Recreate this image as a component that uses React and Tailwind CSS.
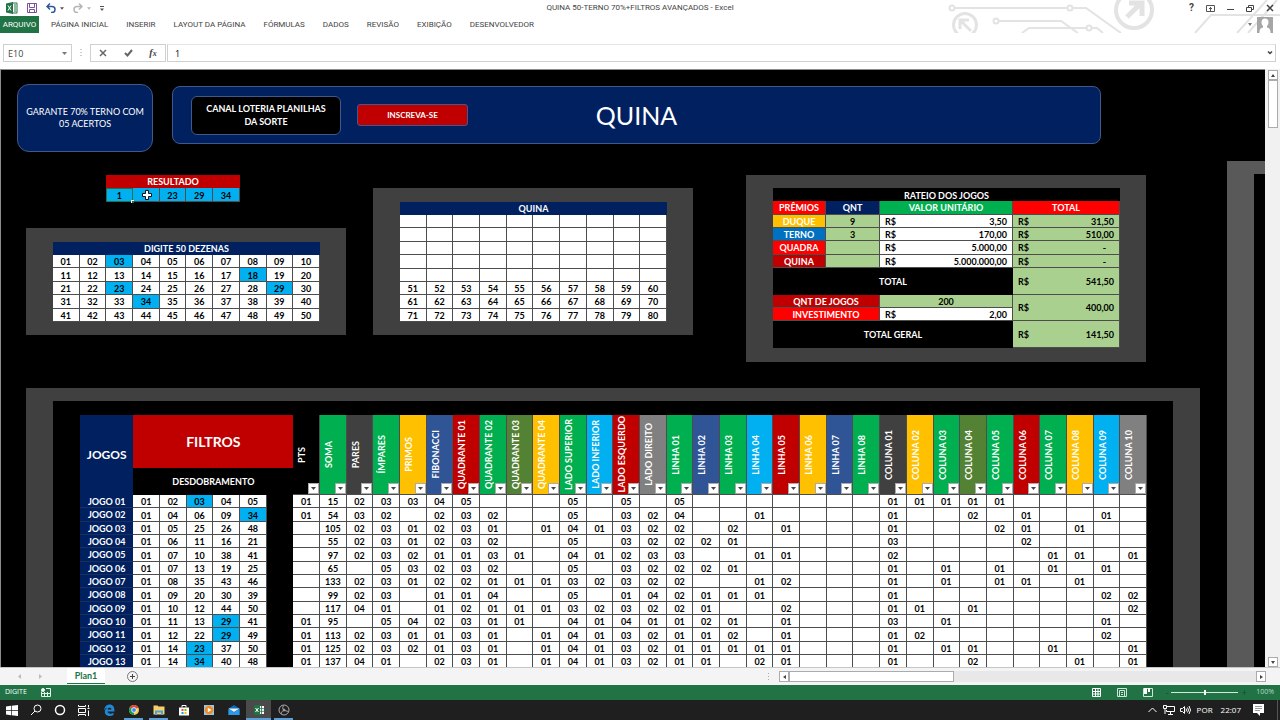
import React, { useState } from "react";
import clsx from "clsx";

const ribbonTabs = [
  "PÁGINA INICIAL",
  "INSERIR",
  "LAYOUT DA PÁGINA",
  "FÓRMULAS",
  "DADOS",
  "REVISÃO",
  "EXIBIÇÃO",
  "DESENVOLVEDOR",
];

const drawn = ["03", "18", "23", "29", "34"];

const filterColumns = [
  ["PTS", "bg-black"],
  ["SOMA", "bg-[#00b050]"],
  ["PARES", "bg-[#404040]"],
  ["ÍMPARES", "bg-[#00b050]"],
  ["PRIMOS", "bg-[#ffc000]"],
  ["FIBONACCI", "bg-[#2f5597]"],
  ["QUADRANTE 01", "bg-[#c00000]"],
  ["QUADRANTE 02", "bg-[#00b050]"],
  ["QUADRANTE 03", "bg-[#548235]"],
  ["QUADRANTE 04", "bg-[#ffc000]"],
  ["LADO SUPERIOR", "bg-[#00b050]"],
  ["LADO INFERIOR", "bg-[#00b0f0]"],
  ["LADO ESQUERDO", "bg-[#c00000]"],
  ["LADO DIREITO", "bg-[#808080]"],
  ["LINHA 01", "bg-[#00b050]"],
  ["LINHA 02", "bg-[#2f5597]"],
  ["LINHA 03", "bg-[#00b050]"],
  ["LINHA 04", "bg-[#00b0f0]"],
  ["LINHA 05", "bg-[#c00000]"],
  ["LINHA 06", "bg-[#ffc000]"],
  ["LINHA 07", "bg-[#2f5597]"],
  ["LINHA 08", "bg-[#00b050]"],
  ["COLUNA 01", "bg-[#404040]"],
  ["COLUNA 02", "bg-[#ffc000]"],
  ["COLUNA 03", "bg-[#00b050]"],
  ["COLUNA 04", "bg-[#548235]"],
  ["COLUNA 05", "bg-[#00b050]"],
  ["COLUNA 06", "bg-[#c00000]"],
  ["COLUNA 07", "bg-[#00b050]"],
  ["COLUNA 08", "bg-[#ffc000]"],
  ["COLUNA 09", "bg-[#00b0f0]"],
  ["COLUNA 10", "bg-[#808080]"],
];

// numbers of each game, then the value of every filter column ("." is an empty cell)
const games = [
  ["01 02 03 04 05", "01 15 02 03 03 04 05 . . . 05 . 05 . 05 . . . . . . . 01 01 01 01 01 . . . . ."],
  ["01 04 06 09 34", "01 54 03 02 . 02 03 02 . . 05 . 03 02 04 . . 01 . . . . 01 . . 02 . 01 . . 01 ."],
  ["01 05 25 26 48", ". 105 02 03 01 02 03 01 . 01 04 01 03 02 02 . 02 . 01 . . . 01 . . . 02 01 . 01 . ."],
  ["01 06 11 16 21", ". 55 02 03 01 02 03 02 . . 05 . 03 02 02 02 01 . . . . . 03 . . . . 02 . . . ."],
  ["01 07 10 38 41", ". 97 02 03 02 01 01 03 01 . 04 01 02 03 03 . . 01 01 . . . 02 . . . . . 01 01 . 01"],
  ["01 07 13 19 25", ". 65 . 05 03 02 03 02 . . 05 . 03 02 02 02 01 . . . . . 01 . 01 . 01 . 01 . 01 ."],
  ["01 08 35 43 46", ". 133 02 03 01 02 02 01 01 01 03 02 03 02 02 . . 01 02 . . . 01 . 01 . 01 01 . 01 . ."],
  ["01 09 20 30 39", ". 99 02 03 . 01 01 04 . . 05 . 01 04 02 01 01 01 . . . . 01 . . . . . . . 02 02"],
  ["01 10 12 44 50", ". 117 04 01 . 01 02 01 01 01 03 02 03 02 02 01 . . 02 . . . 01 01 . 01 . . . . . 02"],
  ["01 11 13 29 41", "01 95 . 05 04 02 03 01 01 . 04 01 04 01 01 02 01 . 01 . . . 03 . 01 . . . . . 01 ."],
  ["01 12 22 29 49", "01 113 02 03 01 01 03 01 . 01 04 01 03 02 01 01 02 . 01 . . . 01 02 . . . . . . 02 ."],
  ["01 14 23 37 50", "01 125 02 03 02 01 03 01 . 01 04 01 03 02 01 01 01 01 01 . . . 01 . 01 01 . . 01 . . 01"],
  ["01 14 34 40 48", "01 137 04 01 . 02 03 01 . 01 04 01 03 02 01 01 . 02 01 . . . 01 . . 02 . . . 01 . 01"],
];

const prizes = [
  { name: "DUQUE", color: "bg-[#ffc000]", count: "9", unit: "3,50", total: "31,50" },
  { name: "TERNO", color: "bg-[#0070c0]", count: "3", unit: "170,00", total: "510,00" },
  { name: "QUADRA", color: "bg-[#ff0000]", count: "", unit: "5.000,00", total: "-" },
  { name: "QUINA", color: "bg-[#c00000]", count: "", unit: "5.000.000,00", total: "-" },
];

const pad = (n) => String(n).padStart(2, "0");

function numberRows(start, rows) {
  return Array.from({ length: rows }, (_, r) =>
    Array.from({ length: 10 }, (_, c) => pad(start + r * 10 + c))
  );
}

const cell = "p-0 pt-[2px] border-r border-b border-[#4d4d4d] text-center align-middle";
const sheetTable = "table-fixed border-separate border-spacing-0 text-[9px] leading-[10px]";

function Circuits() {
  return (
    <svg
      className="absolute top-0 right-0 pointer-events-none"
      width="332"
      height="33"
      viewBox="948 0 332 33"
      fill="none"
      stroke="#e3e3e3"
      strokeWidth="2"
    >
      <circle cx="952" cy="8" r="2.5" />
      <path d="M955 8H1067M1073 8H1086L1121 33" />
      <circle cx="1070" cy="8" r="2.5" />
      <circle cx="965" cy="25" r="11.5" strokeWidth="3" />
      <path d="M971 31L960 20M960 29V20H969" strokeWidth="3" />
      <circle cx="996" cy="21" r="2.5" />
      <path d="M999 21H1061L1078 33M1022 33L1029 28H1086M1092 28H1097L1103 33" />
      <circle cx="1089" cy="28" r="2.5" />
      <circle cx="1134" cy="10" r="18" strokeWidth="4" />
      <path d="M1127 17L1141 3M1129 3H1142V16" strokeWidth="5" />
      <path d="M1195 33L1211 15H1280M1237 33L1267 0M1248 33L1277 0" />
    </svg>
  );
}

function TitleBar() {
  return (
    <header className="relative bg-white shrink-0 font-['Roboto','Noto_Sans',sans-serif]">
      <Circuits />
      <div className="relative grid grid-cols-[1fr_auto_1fr] items-center h-4">
        <div className="flex items-center pl-[6px] gap-[9px]">
          <svg width="12" height="12" viewBox="0 0 12 12">
            <path d="M6 1h5v10H6z" fill="#fff" stroke="#217346" />
            <path d="M8 3h2M8 5h2M8 7h2M8 9h2" stroke="#217346" />
            <path d="M0 1.5L7 0v12L0 10.500z" fill="#217346" />
            <path d="M2 3.500l3 5M5 3.500l-3 5" stroke="#fff" />
          </svg>
          <button aria-label="Salvar">
            <svg width="10" height="10" viewBox="0 0 10 10" fill="none" stroke="#7b4fa3">
              <path d="M.5.5h9v9h-9z" />
              <path d="M2.500.5v4h5v-4M2.500 9.500v-3h5v3" />
            </svg>
          </button>
          <button aria-label="Desfazer" className="flex items-center gap-1">
            <svg width="10" height="10" viewBox="0 0 10 10" fill="none" stroke="#2b579a" strokeWidth="1.500">
              <path d="M4 .5L1 3.500l3 3M1 3.500h5a3 3 0 010 6H5" />
            </svg>
            <svg width="4" height="3" viewBox="0 0 5 3" fill="#555"><path d="M0 0h5L2.500 3z" /></svg>
          </button>
          <button aria-label="Refazer" className="flex items-center gap-1">
            <svg width="10" height="10" viewBox="0 0 10 10" fill="none" stroke="#b5b5b5" strokeWidth="1.500">
              <path d="M6 .5l3 3-3 3M9 3.500H4a3 3 0 000 6h1" />
            </svg>
            <svg width="4" height="3" viewBox="0 0 5 3" fill="#b5b5b5"><path d="M0 0h5L2.500 3z" /></svg>
          </button>
          <button aria-label="Personalizar">
            <svg width="4" height="5" viewBox="0 0 5 6" fill="#555"><path d="M0 0h5v1H0zM0 3h5L2.500 6z" /></svg>
          </button>
        </div>
        <h1 className="text-[8px] text-[#444]">QUINA 50-TERNO 70%+FILTROS AVANÇADOS - Excel</h1>
        <div className="flex items-center justify-end gap-3 pr-[6px] text-[#444]">
          <button aria-label="Ajuda" className="text-[10px] leading-3 font-bold">?</button>
          <button aria-label="Opções da faixa">
            <svg width="9" height="7" viewBox="0 0 9 7" fill="none" stroke="#555">
              <path d="M.5.5h8v6h-8zM4.500 2v4M3 3.500h3" />
            </svg>
          </button>
          <button aria-label="Minimizar">
            <svg width="7" height="7" viewBox="0 0 7 7" stroke="#444"><path d="M0 4.500h7" /></svg>
          </button>
          <button aria-label="Restaurar">
            <svg width="8" height="7" viewBox="0 0 8 7" fill="none" stroke="#444">
              <path d="M.5 2.500h5v4h-5zM2.500 2V.5h5v4H6" />
            </svg>
          </button>
          <button aria-label="Fechar">
            <svg width="8" height="8" viewBox="0 0 8 8" stroke="#444" strokeWidth="1.500"><path d="M1 1l6 6M7 1L1 7" /></svg>
          </button>
        </div>
      </div>
      <nav className="relative flex items-center h-[17px] text-[8px] text-[#444]">
        <button className="bg-[#217346] text-white w-[39px] h-full text-center">ARQUIVO</button>
        <div className="flex gap-[18px] pl-3">
          {ribbonTabs.map((tab) => (
            <button key={tab}>{tab}</button>
          ))}
        </div>
        <button aria-label="Conta" className="ml-auto mr-[7px] flex items-center gap-[5px] h-full">
          <svg width="4" height="3" viewBox="0 0 4 3" fill="#777"><path d="M0 0h4L2 3z" /></svg>
          <svg width="16" height="16" viewBox="0 0 16 16">
            <path d="M0 0h16v16H0z" fill="#a6a6a6" />
            <path d="M8 1.500a3.500 4 0 013.500 4c0 2-1 3-1.500 3.500v1.500c2 .5 3.500 1 3.500 5.500h-11c0-4.500 1.500-5 3.500-5.500V9C5.500 8.500 4.500 7.500 4.500 5.500a3.500 4 0 013.500-4z" fill="#fff" />
          </svg>
        </button>
      </nav>
    </header>
  );
}

function FormulaBar({ value, onChange }) {
  return (
    <div className="flex items-center shrink-0 h-9 pt-1 pl-[3px] pr-1 bg-white text-[9px] text-[#444]">
      <div className="flex items-center w-[69px] h-[18px] border border-[#d0d0d0]">
        <input aria-label="Caixa de nome" defaultValue="E10" className="w-full min-w-0 pl-1 pt-px outline-none" />
        <button aria-label="Nomes" className="px-1">
          <svg width="5" height="3" viewBox="0 0 5 3" fill="#777"><path d="M0 0h5L2.500 3z" /></svg>
        </button>
      </div>
      <svg className="mx-[7px]" width="4" height="8" viewBox="0 0 4 8" fill="#999">
        <path d="M1.500 0h1v1h-1zM1.500 3h1v1h-1zM1.500 6h1v1h-1z" />
      </svg>
      <div className="flex items-center justify-around w-[76px] h-[18px] border border-[#d0d0d0]">
        <button aria-label="Cancelar">
          <svg width="8" height="8" viewBox="0 0 8 8" stroke="#666" strokeWidth="1.500"><path d="M1 1l6 6M7 1L1 7" /></svg>
        </button>
        <button aria-label="Inserir">
          <svg width="9" height="8" viewBox="0 0 9 8" fill="none" stroke="#666" strokeWidth="2"><path d="M1 4l2.500 2.500L8 1" /></svg>
        </button>
        <button aria-label="Inserir função" className="font-['Liberation_Serif',serif] italic font-bold text-[10px] leading-3">
          f<span className="text-[8px]">x</span>
        </button>
      </div>
      <div className="flex items-center flex-1 h-[18px] ml-px border border-[#d0d0d0] border-t-[#e4e4e4]">
        <input
          aria-label="Barra de fórmulas"
          value={value}
          onChange={(e) => onChange(e.target.value)}
          className="flex-1 min-w-0 pl-[7px] pt-px text-black outline-none"
        />
        <button aria-label="Expandir" className="px-[2px]">
          <svg width="6" height="4" viewBox="0 0 6 4" fill="none" stroke="#444" strokeWidth="1.500"><path d="M1 .5l2 2 2-2" /></svg>
        </button>
      </div>
    </div>
  );
}

function Banner() {
  return (
    <div className="flex items-start gap-[19px] pt-[14px] pl-4 pr-[126px] text-white">
      <div className="flex items-center justify-center w-[136px] h-[68px] px-2 rounded-xl border border-[#41598a] bg-[#002060] text-center text-[9px] leading-3 font-normal">
        GARANTE 70% TERNO COM 05 ACERTOS
      </div>
      <div className="grid grid-cols-[1fr_auto_1fr] items-center flex-1 h-[58px] mt-[2px] px-[18px] rounded-lg border border-[#41598a] bg-[#002060]">
        <div className="flex items-center gap-4">
          <div className="flex items-center justify-center w-[150px] h-[39px] px-2 rounded-md border border-[#41598a] bg-black text-center text-[9px] leading-[13px] font-bold">
            CANAL LOTERIA PLANILHAS DA SORTE
          </div>
          <button className="w-[111px] h-[22px] rounded-[3px] border border-[#41598a] bg-[#c00000] text-[8px] font-bold">
            INSCREVA-SE
          </button>
        </div>
        <h2 className="text-[25px] leading-8">QUINA</h2>
      </div>
    </div>
  );
}

function Result({ value, onChange }) {
  return (
    <table className={clsx(sheetTable, "w-[134px] h-[27px] ml-20")}>
      <thead>
        <tr>
          <th colSpan={5} className="p-0 pt-[2px] pb-px bg-[#c00000] text-white">RESULTADO</th>
        </tr>
      </thead>
      <tbody>
        <tr className="bg-[#00b0f0] font-bold">
          <td className="relative p-0 pt-[2px] outline outline-[#217346] -outline-offset-1">
            <input
              aria-label="E10"
              value={value}
              onChange={(e) => onChange(e.target.value)}
              className="block w-full text-center outline-none"
            />
            <span className="absolute -right-px -bottom-px size-[3px] bg-[#217346] border-t border-l border-white" />
          </td>
          <td className={clsx(cell, "relative")}>
            <svg className="absolute top-px left-2" width="12" height="12" viewBox="0 0 12 12">
              <path d="M4.500 1.500h3v3h3v3h-3v3h-3v-3h-3v-3h3z" fill="#fff" stroke="#111" />
            </svg>
          </td>
          <td className={cell}>23</td>
          <td className={cell}>29</td>
          <td className={cell}>34</td>
        </tr>
      </tbody>
    </table>
  );
}

function NumberTable({ title, rows, className }) {
  return (
    <div className="w-80 pt-[14px] pb-[13px] pl-[27px] pr-[26px] bg-[#404040]">
      <table className={clsx(sheetTable, "w-full bg-white", className)}>
        <thead>
          <tr>
            <th colSpan={10} className="p-0 pt-px h-[13px] bg-[#002060] text-white">{title}</th>
          </tr>
        </thead>
        <tbody className="font-bold">
          {rows.map((row, r) => (
            <tr key={r}>
              {row.map((n, c) => (
                <td key={c} className={clsx(cell, "h-[13px]", drawn.includes(n) && "bg-[#00b0f0]")}>{n}</td>
              ))}
            </tr>
          ))}
        </tbody>
      </table>
    </div>
  );
}

function Money({ value, className, ...rest }) {
  return (
    <td className={clsx("p-0 pt-[2px] border-r border-b border-[#4d4d4d]", className)} {...rest}>
      <div className="flex justify-between px-[5px]">
        <span>R$</span>
        <span className={value === "-" ? "pr-2" : ""}>{value}</span>
      </div>
    </td>
  );
}

function Prizes() {
  return (
    <div className="w-[400px] pt-[13px] pb-[14px] pl-[27px] pr-[26px] bg-[#404040]">
      <table className={clsx(sheetTable, "w-full h-40 font-bold")}>
        <colgroup>
          <col className="w-[53px]" />
          <col className="w-[54px]" />
          <col className="w-[133px]" />
          <col />
        </colgroup>
        <tbody>
          <tr className="h-[13px] bg-black text-white">
            <th colSpan={4} className="p-0 pt-[2px]">RATEIO DOS JOGOS</th>
          </tr>
          <tr className="h-[13px] text-white">
            <th className={clsx(cell, "bg-[#ff0000]")}>PRÊMIOS</th>
            <th className={clsx(cell, "bg-[#002060]")}>QNT</th>
            <th className={clsx(cell, "bg-[#00b050]")}>VALOR UNITÁRIO</th>
            <th className={clsx(cell, "bg-[#ff0000]")}>TOTAL</th>
          </tr>
          {prizes.map((prize) => (
            <tr key={prize.name} className="h-[13px]">
              <th className={clsx(cell, "text-white", prize.color)}>{prize.name}</th>
              <td className={clsx(cell, "bg-[#a9d08e]")}>{prize.count}</td>
              <Money value={prize.unit} className="bg-white" />
              <Money value={prize.total} className="bg-[#a9d08e]" />
            </tr>
          ))}
          <tr className="h-[26px]">
            <th colSpan={3} className="p-0 pt-px bg-black text-white">TOTAL</th>
            <Money value="541,50" className="bg-[#a9d08e]" />
          </tr>
          <tr className="h-[13px]">
            <th colSpan={2} className={clsx(cell, "bg-[#c00000] text-white")}>QNT DE JOGOS</th>
            <td className={clsx(cell, "bg-[#a9d08e]")}>200</td>
            <Money value="400,00" rowSpan={2} className="bg-[#a9d08e]" />
          </tr>
          <tr className="h-[13px]">
            <th colSpan={2} className={clsx(cell, "bg-[#ff0000] text-white")}>INVESTIMENTO</th>
            <Money value="2,00" className="bg-white" />
          </tr>
          <tr className="h-[26px]">
            <th colSpan={3} className="p-0 pt-px bg-black text-white">TOTAL GERAL</th>
            <Money value="141,50" className="bg-[#a9d08e]" />
          </tr>
        </tbody>
      </table>
    </div>
  );
}

function Games() {
  return (
    <div className="mt-[26px] ml-[25px] mr-[27px] pt-[14px] pl-[27px] pr-[26px] border-t-[13px] border-x-[27px] border-[#404040] bg-black">
      <table className={clsx(sheetTable, "w-full")}>
        <colgroup>
          {Array.from({ length: 40 }, (_, i) => (
            <col key={i} />
          ))}
        </colgroup>
        <thead className="text-white">
          <tr className="h-[53px]">
            <th colSpan={2} rowSpan={2} className="p-0 bg-[#002060] text-[12px]">JOGOS</th>
            <th colSpan={6} className="p-0 bg-[#c00000] text-[14px]">FILTROS</th>
            {filterColumns.map(([name, color]) => (
              <th key={name} rowSpan={2} className={clsx("relative p-0 border-r border-b border-[#4d4d4d] align-middle", color)}>
                <span className="mx-auto block w-[18px] [writing-mode:vertical-rl] rotate-180 text-[9px] leading-[18px] whitespace-nowrap">
                  {name}
                </span>
                <button aria-label={`Filtrar ${name}`} className="absolute right-0 bottom-0 flex items-center justify-center size-[11px] border border-[#ababab] bg-white">
                  <svg width="5" height="3" viewBox="0 0 5 3" fill="#444"><path d="M0 0h5L2.500 3z" /></svg>
                </button>
              </th>
            ))}
          </tr>
          <tr className="h-[27px]">
            <th colSpan={6} className="p-0 bg-black text-[9px]">DESDOBRAMENTO</th>
          </tr>
        </thead>
        <tbody className="font-bold">
          {games.map(([numbers, filters], i) => (
            <tr key={i} className={i % 3 === 1 ? "h-[14px]" : "h-[13px]"}>
              <th colSpan={2} className="p-0 pt-px border-b border-[#1b2f5e] bg-[#002060] text-white">JOGO {pad(i + 1)}</th>
              {numbers.split(" ").map((n, c) => (
                <td key={c} className={clsx(cell, drawn.includes(n) ? "bg-[#00b0f0]" : "bg-white")}>{n}</td>
              ))}
              <td className="p-0 bg-black" />
              {filters.split(" ").map((v, c) => (
                <td key={c} className={clsx(cell, "bg-white")}>{v === "." ? "" : v}</td>
              ))}
            </tr>
          ))}
        </tbody>
      </table>
    </div>
  );
}

function VerticalScroll() {
  return (
    <div className="flex flex-col items-center w-[15px] shrink-0 bg-[#f1f1f1]">
      <button aria-label="Rolar para cima" className="flex items-center justify-center mt-px w-[10px] h-[10px] border border-[#ababab] bg-white">
        <svg width="4" height="3" viewBox="0 0 4 3" fill="#444"><path d="M0 3h4L2 0z" /></svg>
      </button>
      <div className="w-[10px] h-12 border border-[#ababab] bg-white" />
      <button aria-label="Rolar para baixo" className="flex items-center justify-center mt-auto w-[10px] h-[10px] border border-[#ababab] bg-white">
        <svg width="4" height="3" viewBox="0 0 4 3" fill="#444"><path d="M0 0h4L2 3z" /></svg>
      </button>
    </div>
  );
}

function SheetTabs() {
  return (
    <div className="flex items-center shrink-0 h-[18px] bg-[#f4f4f4] border-t border-[#c6c6c6]">
      <div className="flex gap-4 w-[67px] pl-[18px]">
        <svg width="4" height="5" viewBox="0 0 4 5" fill="#bbb"><path d="M3 0v5L0 2.500z" /></svg>
        <svg width="4" height="5" viewBox="0 0 4 5" fill="#bbb"><path d="M1 0v5l3-2.500z" /></svg>
      </div>
      <button className="self-start w-[38px] h-4 pt-px border-b border-[#217346] bg-white text-[9px] leading-3 font-bold text-[#217346] font-['Lato','Carlito',sans-serif]">
        Plan1
      </button>
      <button aria-label="Nova planilha" className="ml-[22px]">
        <svg width="11" height="11" viewBox="0 0 11 11" fill="none" stroke="#777">
          <circle cx="5.500" cy="5.500" r="5" />
          <path d="M5.500 3v5M3 5.500h5" stroke="#444" />
        </svg>
      </button>
      <svg className="ml-auto mr-[9px]" width="2" height="8" viewBox="0 0 2 8" fill="#aaa">
        <path d="M0 0h1v1H0zM0 3h1v1H0zM0 6h1v1H0z" />
      </svg>
      <div className="flex w-[487px] h-[11px] mr-[14px] bg-[#e8e8e8]">
        <button aria-label="Rolar para a esquerda" className="flex items-center justify-center w-[10px] border border-[#ababab] bg-white">
          <svg width="3" height="4" viewBox="0 0 3 4" fill="#444"><path d="M3 0v4L0 2z" /></svg>
        </button>
        <div className="w-[165px] border border-[#ababab] bg-white" />
        <button aria-label="Rolar para a direita" className="flex items-center justify-center ml-auto w-[10px] border border-[#ababab] bg-white">
          <svg width="3" height="4" viewBox="0 0 3 4" fill="#444"><path d="M0 0v4l3-2z" /></svg>
        </button>
      </div>
    </div>
  );
}

function StatusBar() {
  return (
    <div className="flex items-center shrink-0 h-[15px] pl-[5px] pr-[6px] bg-[#217346] text-[7px] text-white">
      <span>DIGITE</span>
      <svg className="ml-[14px]" width="10" height="9" viewBox="0 0 10 9" fill="none" stroke="#e5f2ea">
        <path d="M.5 3.500v5h9v-8H5M1 5.500h8M3.500 4v4M6.500 4v4" />
        <circle cx="2" cy="2" r="1.500" fill="#fff" />
      </svg>
      <div className="flex items-center gap-4 ml-auto">
        <button aria-label="Normal">
          <svg width="9" height="9" viewBox="0 0 9 9" fill="none" stroke="#fff"><path d="M.5.5h8v8h-8zM3.500 0v9M6 0v9M0 3.500h9M0 6h9" /></svg>
        </button>
        <button aria-label="Layout da página">
          <svg width="10" height="9" viewBox="0 0 10 9" fill="none" stroke="#cfe5d8"><path d="M.5.5h9v8h-9zM2.500 2.500h5v6M2.500 2.500v6M4 4.500h2M4 6.500h2" /></svg>
        </button>
        <button aria-label="Quebra de página">
          <svg width="10" height="9" viewBox="0 0 10 9" fill="none" stroke="#cfe5d8"><path d="M.5.5h9v8h-9z" /><path d="M1 0h3v6H1zM5 0h2v4H5z" fill="#fff" stroke="none" /></svg>
        </button>
      </div>
      <span className="ml-[10px] w-2 text-center text-[#0f4a2b] text-[9px] leading-3">-</span>
      <input
        aria-label="Zoom"
        type="range"
        min="0"
        max="200"
        defaultValue="100"
        className="w-[67px] h-px appearance-none bg-[#d5e8dd] [&::-webkit-slider-thumb]:appearance-none [&::-webkit-slider-thumb]:w-[2px] [&::-webkit-slider-thumb]:h-[5px] [&::-webkit-slider-thumb]:bg-white"
      />
      <span className="w-3 text-center text-[#0f4a2b] text-[9px] leading-3">+</span>
      <span className="ml-[6px] text-[#b9d8c7]">100%</span>
    </div>
  );
}

const taskIcons = [
  {
    name: "Microsoft Edge",
    icon: <path d="M1 6.500C1.500 2.500 4 .5 6.500.5 10 .5 11.500 3 11.500 7.500H4.500c.3 2.500 4 2.700 6 1.200v2.300C7 13 1.800 12 1.800 7.800c0-2 1.200-3.300 2.700-4C3 4 1.700 5 1 6.500zM4.500 5.500h4C8.400 3 4.800 3 4.500 5.500z" fill="#1e8ad6" />,
  },
  {
    name: "Chrome",
    open: true,
    icon: (
      <>
        <circle cx="6" cy="6" r="5" fill="#ffcd40" />
        <path d="M6 6L1.700 3.500a5 5 0 018.600 0z" fill="#db4437" />
        <path d="M6 6L1.700 3.500A5 5 0 006 11z" fill="#0f9d58" />
        <circle cx="6" cy="6" r="2.400" fill="#4285f4" stroke="#fff" strokeWidth=".8" />
      </>
    ),
  },
  {
    name: "Explorador",
    open: true,
    icon: (
      <>
        <path d="M.5 1.500h4l1 1h6v8H.5z" fill="#f7d06b" />
        <path d="M2 11V6.500h8V11H8V8.500H4V11z" fill="#4aa3df" />
      </>
    ),
  },
  {
    name: "Loja",
    icon: (
      <>
        <path d="M1 3.500h10v8H1z" fill="#fff" />
        <path d="M4 3.500v-2h4v2" fill="none" stroke="#fff" />
        <path d="M3.500 5h2v2h-2z" fill="#f25022" />
        <path d="M6.500 5h2v2h-2z" fill="#7fba00" />
        <path d="M3.500 8h2v2h-2z" fill="#00a4ef" />
        <path d="M6.500 8h2v2h-2z" fill="#ffb900" />
      </>
    ),
  },
  {
    name: "Media Player",
    icon: (
      <>
        <path d="M1 1h10v10H1z" fill="#9cc7e4" />
        <circle cx="6" cy="6" r="4.300" fill="#f08a24" />
        <path d="M4.800 3.800v4.400L8.500 6z" fill="#fff" />
      </>
    ),
  },
  {
    name: "Email",
    icon: (
      <>
        <path d="M.5 4.500L6 1l5.500 3.500V11H.5z" fill="#0f6cbd" />
        <path d="M.5 4.500h11L6 8z" fill="#e8f3fb" />
        <path d="M.5 5L6 8.300 11.500 5v6H.5z" fill="#2b9be8" />
      </>
    ),
  },
  {
    name: "Excel",
    open: true,
    active: true,
    icon: (
      <>
        <path d="M6 2h5v8H6z" fill="#fff" />
        <path d="M8.500 2v8M6 4.600h5M6 7.300h5" stroke="#217346" strokeWidth=".8" />
        <path d="M1 1.500L7 .5v11l-6-1z" fill="#217346" />
        <path d="M2.500 4l3 4M5.500 4l-3 4" stroke="#fff" />
      </>
    ),
  },
  {
    name: "OBS",
    open: true,
    icon: (
      <g fill="none" stroke="#aaa">
        <circle cx="6" cy="6" r="5" />
        <path d="M6 1.500C4 3 4.500 5 6 6M10.500 7.500C8.500 7 7.500 7 6 6M3 10c.5-2 1.500-3 3-4" />
        <circle cx="6" cy="6" r="1" />
      </g>
    ),
  },
];

function Taskbar() {
  return (
    <footer className="flex items-stretch shrink-0 h-5 bg-[#1f1f1f] text-[8px] text-white">
      <button aria-label="Iniciar" className="flex items-center justify-center w-6">
        <svg width="12" height="11" viewBox="0 0 12 11" fill="#fff"><path d="M0 1.500L5 .8v4.400H0zM5.700.7L12 0v5.200H5.700zM0 5.900h5v4.400l-5-.7zM5.700 5.900H12V11l-6.300-.7z" /></svg>
      </button>
      <button aria-label="Pesquisar" className="flex items-center justify-center w-6">
        <svg width="12" height="12" viewBox="0 0 12 12" fill="none" stroke="#fff"><circle cx="7.500" cy="4.500" r="3.500" /><path d="M5 7L1 11" /></svg>
      </button>
      <button aria-label="Cortana" className="flex items-center justify-center w-6">
        <svg width="12" height="12" viewBox="0 0 12 12" fill="none" stroke="#fff" strokeWidth="1.500"><circle cx="6" cy="6" r="4.500" /></svg>
      </button>
      <button aria-label="Visão de tarefas" className="flex items-center justify-center w-6">
        <svg width="12" height="11" viewBox="0 0 12 11" fill="none" stroke="#fff"><path d="M.5 0v1.500h7V0M.5 11V9.500h7V11M.5 3.500h7v4h-7zM10.500 0v2.500M10.500 5.500V11M9.500 3.500h2" /></svg>
      </button>
      <div className="flex">
        {taskIcons.map((task) => (
          <button
            key={task.name}
            aria-label={task.name}
            className={clsx("flex flex-col items-center w-[25px] pt-1", task.active && "bg-[#4a4a4a]")}
          >
            <svg width="12" height="12" viewBox="0 0 12 12">{task.icon}</svg>
            {task.open && <span className={clsx("mt-auto h-[2px] bg-[#5f9fd8]", task.active ? "w-full" : "w-[19px]")} />}
          </button>
        ))}
      </div>
      <div className="flex items-center ml-auto mr-[2px] pr-[13px] border-r border-[#555]">
        <svg width="9" height="6" viewBox="0 0 9 6" fill="none" stroke="#fff"><path d="M.5 5l4-4 4 4" /></svg>
        <svg className="ml-[6px]" width="12" height="10" viewBox="0 0 12 10" fill="none" stroke="#fff"><path d="M4 1.500h7.500v5H3.500V5M7.500 7v2M5 9.500h5M.5.5h3v3h-3zM2 4v5" /></svg>
        <svg className="ml-[5px]" width="11" height="10" viewBox="0 0 11 10" fill="none" stroke="#fff"><path d="M.5 3.500h2l2-2v7l-2-2h-2zM6 3.500q1 1.500 0 3M7.500 2.500q2 2.500 0 5M9 1q3 4 0 8" /></svg>
        <span className="ml-[6px]">POR</span>
        <span className="ml-2">22:07</span>
        <svg className="ml-3" width="11" height="12" viewBox="0 0 11 12"><path d="M0 0h11v9H7v3L4 9H0z" fill="#fff" /><path d="M2 2.500h7M2 4.500h7M2 6.500h5" stroke="#999" /></svg>
      </div>
    </footer>
  );
}

export default function App() {
  const [value, setValue] = useState("1");

  return (
    <div className="flex flex-col h-screen overflow-hidden bg-white font-['Open_Sans','Noto_Sans',sans-serif]">
      <TitleBar />
      <FormulaBar value={value} onChange={setValue} />
      <div className="flex flex-1 min-h-0">
        <main className="flex flex-1 min-w-0 overflow-hidden border-t border-l border-[#8c8c8c] bg-black font-['Lato','Carlito',sans-serif]">
          <div className="flex-1 min-w-0">
            <Banner />
            <div className="flex items-start mt-[23px] pl-[25px]">
              <div>
                <Result value={value} onChange={setValue} />
                <div className="mt-[26px]">
                  <NumberTable title="DIGITE 50 DEZENAS" rows={numberRows(1, 5)} className="h-20" />
                </div>
              </div>
              <div className="mt-[13px] ml-[27px]">
                <NumberTable
                  title="QUINA"
                  rows={[...Array(5).fill(Array(10).fill("")), ...numberRows(51, 3)]}
                  className="h-[120px]"
                />
              </div>
              <div className="ml-[53px]">
                <Prizes />
              </div>
            </div>
            <Games />
          </div>
          <div className="w-[38px] mt-[91px] shrink-0 border-t-[13px] border-l-[27px] border-[#595959]" />
        </main>
        <VerticalScroll />
      </div>
      <SheetTabs />
      <StatusBar />
      <Taskbar />
    </div>
  );
}
